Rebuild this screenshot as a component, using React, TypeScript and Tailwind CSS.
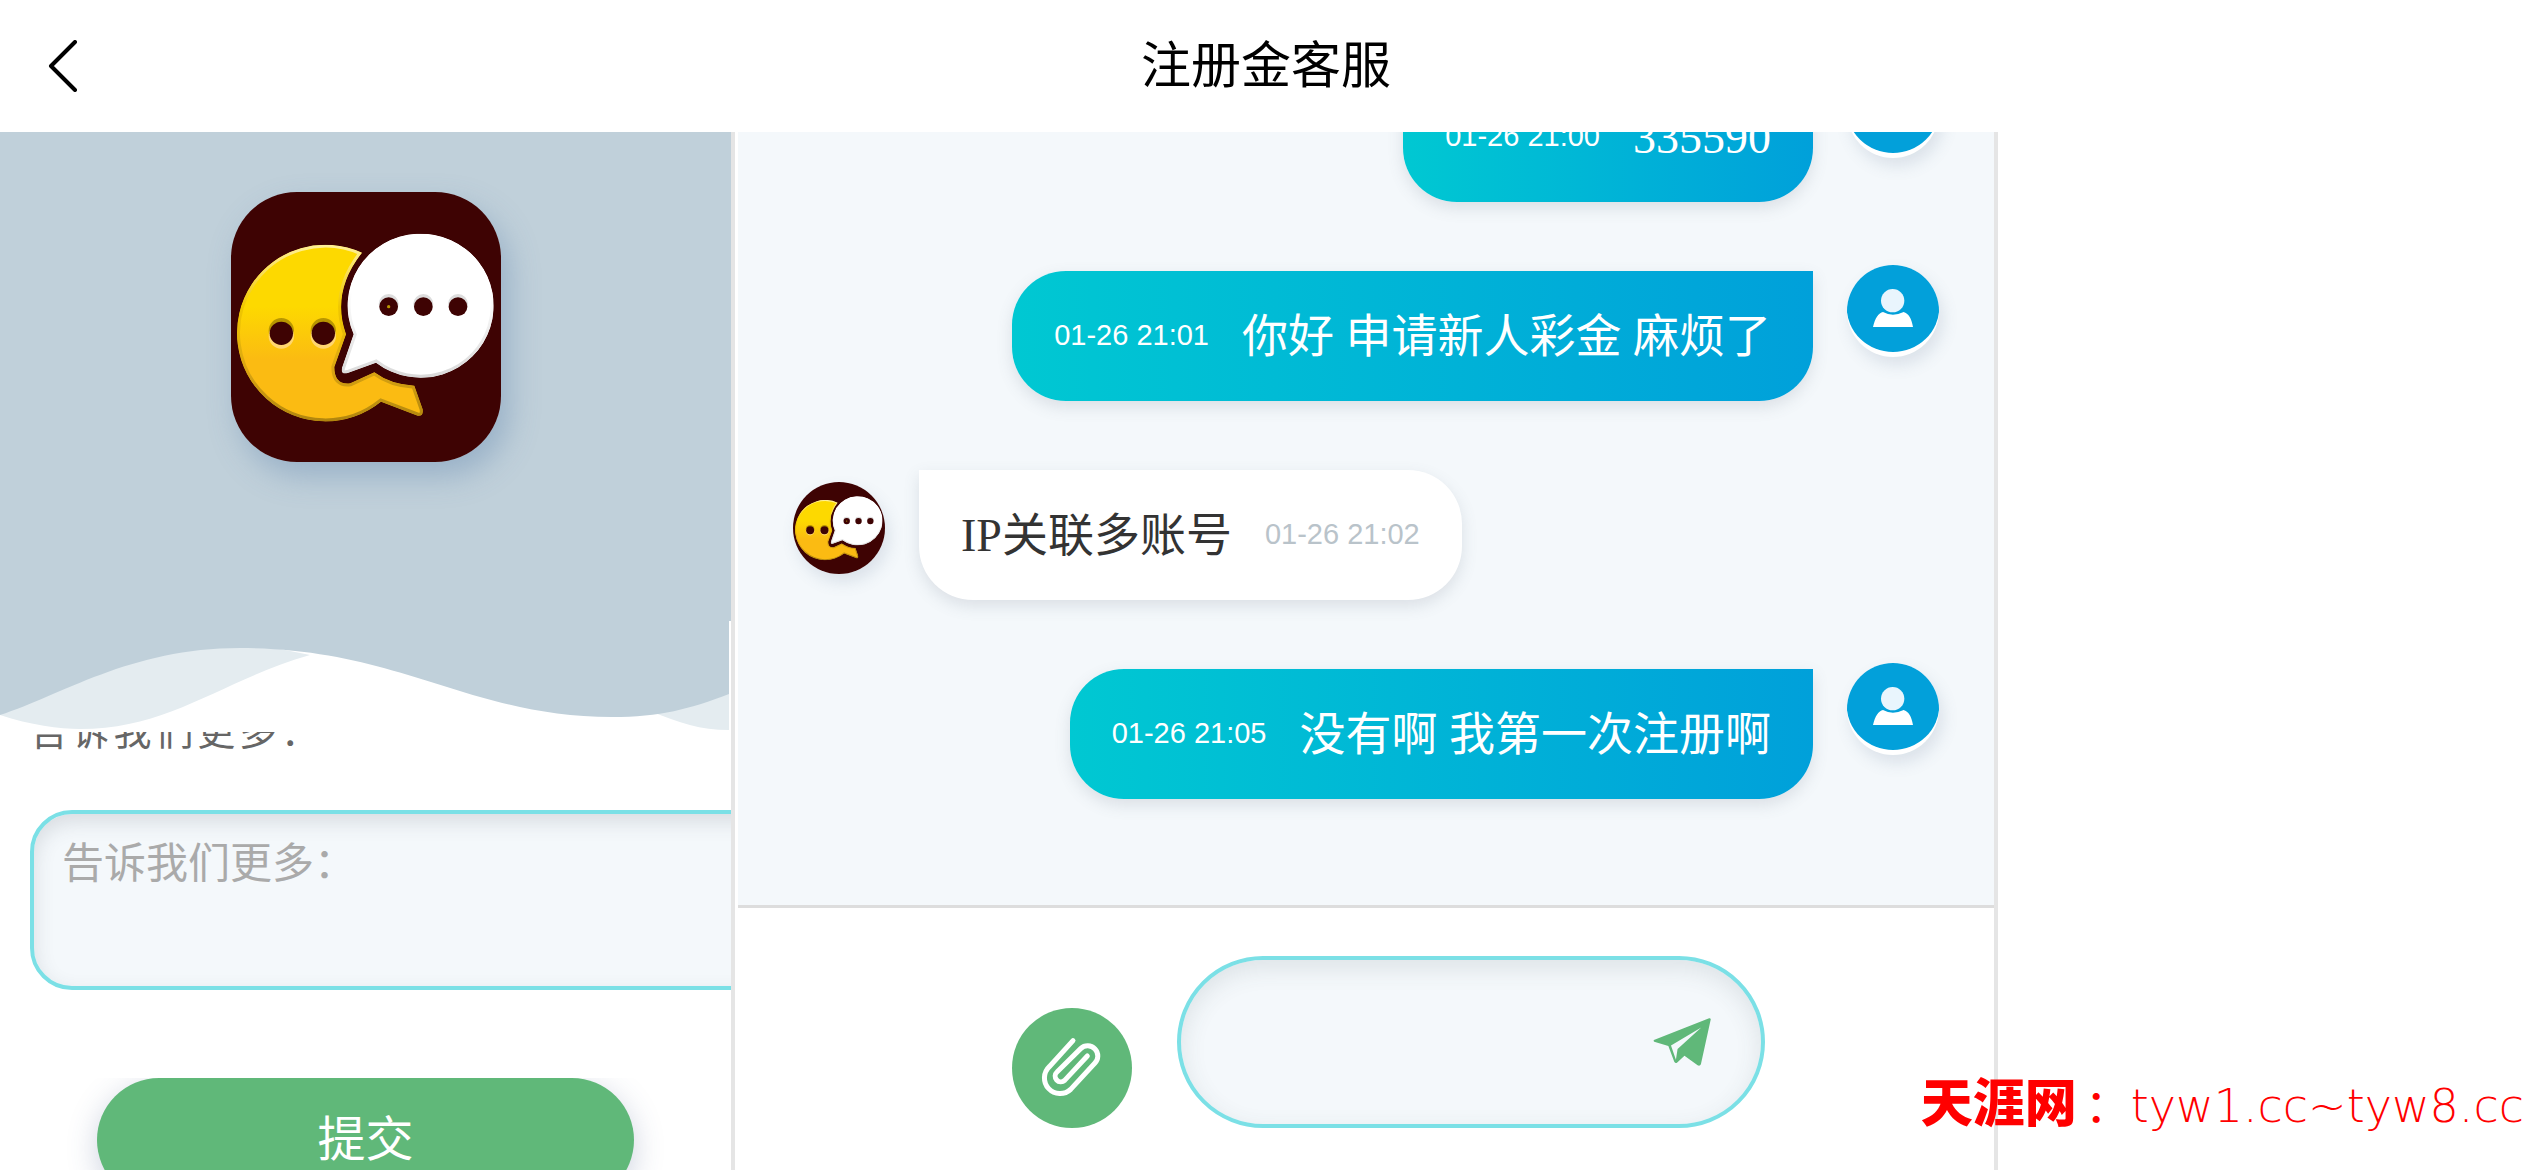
import { useState } from "react";

type Message = {
  id: number;
  from: "me" | "agent";
  text: string;
  time: string;
};

const messages: Message[] = [
  { id: 1, from: "me", text: "335590", time: "01-26 21:00" },
  { id: 2, from: "me", text: "你好 申请新人彩金 麻烦了", time: "01-26 21:01" },
  { id: 3, from: "agent", text: "IP关联多账号", time: "01-26 21:02" },
  { id: 4, from: "me", text: "没有啊 我第一次注册啊", time: "01-26 21:05" },
];

const yellowBubble =
  "M393 182A265 265 0 1 0 450 629L560 671Q578 674 575 652L550 581Q480 578 430 541L358 574Q310 580 310 525L345 427Q300 300 393 182Z";
const whiteBubble =
  "M368 427A219 216 0 1 1 435 512L350 543Q328 548 333 528Z";

const ChatLogo = ({ className }: { className: string }) => (
  <svg viewBox="0 0 810 810" className={className} aria-hidden="true">
    <defs>
      <linearGradient id="yellow" x1="0" y1="0" x2="0" y2="1">
        <stop offset="0.35" stopColor="#fdd900" />
        <stop offset="0.65" stopColor="#fbbb12" />
      </linearGradient>
      <linearGradient id="yellowEdge" x1="0" y1="0" x2="0" y2="1">
        <stop offset="0" stopColor="#fff09a" />
        <stop offset="0.35" stopColor="#f0c800" />
        <stop offset="0.7" stopColor="#dba512" />
        <stop offset="1" stopColor="#b0850e" />
      </linearGradient>
      <linearGradient id="whiteEdge" x1="0" y1="0" x2="0" y2="1">
        <stop offset="0.4" stopColor="#ffffff" />
        <stop offset="1" stopColor="#d9d9d9" />
      </linearGradient>
      <clipPath id="yellowClip">
        <path d={yellowBubble} />
      </clipPath>
      <clipPath id="whiteClip">
        <path d={whiteBubble} />
      </clipPath>
    </defs>
    <rect width="810" height="810" fill="#3e0303" />
    <path
      d={yellowBubble}
      fill="url(#yellow)"
      stroke="url(#yellowEdge)"
      strokeWidth="18"
      clipPath="url(#yellowClip)"
    />
    <path
      d={whiteBubble}
      fill="#ffffff"
      stroke="url(#whiteEdge)"
      strokeWidth="18"
      clipPath="url(#whiteClip)"
    />
    {[151, 277].map((cx) => (
      <g key={cx}>
        <circle cx={cx} cy="416" r="38" fill="#b89600" />
        <circle cx={cx} cy="432" r="38" fill="#ffd670" />
        <circle cx={cx} cy="424" r="35" fill="#3e0303" />
      </g>
    ))}
    {[473, 577, 681].map((cx) => (
      <g key={cx}>
        <circle cx={cx} cy="336" r="30" fill="#dddddd" />
        <circle cx={cx} cy="344" r="28" fill="#3e0303" />
      </g>
    ))}
    <circle cx="473" cy="344" r="5" fill="#b89600" />
  </svg>
);

const UserAvatar = () => (
  <svg
    viewBox="0 0 276 276"
    className="size-[92px] shrink-0 rounded-full bg-white shadow-[4px_8px_16px_rgba(90,110,140,0.16)]"
    aria-hidden="true"
  >
    <ellipse cx="138" cy="126" rx="139" ry="135" fill="#02a0da" />
    <circle cx="137" cy="107" r="35" fill="#e9f5fd" />
    <path
      d="M78 186C84 160 95 143 108 141Q137 157 170 141C184 145 194 160 198 186Z"
      fill="#ffffff"
    />
  </svg>
);

const MessageRow = ({ message }: { message: Message }) => {
  if (message.from === "me") {
    return (
      <li className="flex items-start justify-end gap-[34px]">
        <div className="mt-1.5 flex h-[130px] items-center gap-[33px] rounded-[54px] rounded-tr-none bg-linear-to-r from-[#00c8d2] to-[#00a0da] px-[42px] text-white shadow-[0_6px_16px_rgba(90,100,120,0.16)]">
          <time className="font-['Liberation_Sans',sans-serif] text-[29px]">
            {message.time}
          </time>
          <p className="text-[46px]">{message.text}</p>
        </div>
        <UserAvatar />
      </li>
    );
  }

  return (
    <li className="flex items-start gap-[34px]">
      <ChatLogo className="mt-[18px] size-[92px] shrink-0 rounded-full shadow-[4px_8px_16px_rgba(90,110,140,0.16)]" />
      <div className="mt-1.5 flex h-[130px] items-center gap-[33px] rounded-[54px] rounded-tl-none bg-white px-[42px] shadow-[0_6px_16px_rgba(90,100,120,0.16)]">
        <p className="text-[46px] text-[#333333]">{message.text}</p>
        <time className="font-['Liberation_Sans',sans-serif] text-[29px] text-[#b9c3ca]">
          {message.time}
        </time>
      </div>
    </li>
  );
};

const Waves = () => (
  <svg
    viewBox="0 0 729 111"
    preserveAspectRatio="none"
    className="mr-0.5 h-[111px] w-[calc(100%-2px)]"
    aria-hidden="true"
  >
    <path
      d="M0 94C30 104 60 108 80 108C170 108 220 60 310 34L240 20L0 60ZM650 90C680 102 700 109 729 109V60H650Z"
      fill="#e4ecf0"
    />
    <path
      d="M0 0H729V73C690 88 660 96 612 96C470 96 400 27 240 27C130 27 60 75 0 94Z"
      fill="#c0d0da"
    />
  </svg>
);

const FeedbackPanel = () => {
  const [details, setDetails] = useState("");

  return (
    <aside className="flex min-h-0 min-w-0 flex-col overflow-hidden border-r-4 border-[#e5e5e5]">
      <div className="flex h-[489px] shrink-0 justify-center bg-[#c0d0da] pt-[60px]">
        <ChatLogo className="size-[270px] rounded-[66px] shadow-[8px_14px_30px_rgba(80,120,165,0.35)]" />
      </div>
      <Waves />
      <form className="flex min-h-0 flex-1 flex-col">
        {/* scrolled so that the label is half hidden under the waves */}
        <div className="h-[346px] shrink-0 overflow-hidden pl-[30px]">
          <label
            htmlFor="details"
            className="-mt-5 block h-10 text-[38px] leading-10 tracking-widest text-[#666666]"
          >
            告诉我们更多：
          </label>
          <textarea
            id="details"
            value={details}
            onChange={(e) => setDetails(e.target.value)}
            placeholder="告诉我们更多："
            className="mt-[58px] block h-[180px] w-[120%] resize-none rounded-[42px] border-4 border-[#7be0e6] bg-[#f4f8fb] px-7 py-[22px] text-[42px] leading-[56px] shadow-[inset_0_8px_20px_rgba(60,70,80,0.15)] placeholder:text-[#aaaaaa]"
          />
        </div>
        <div className="min-h-0 flex-1 overflow-hidden px-[97px]">
          <button
            type="button"
            className="h-[124px] w-full rounded-full bg-[#60b879] text-[48px] text-white shadow-[0_8px_30px_rgba(60,80,130,0.25)]"
          >
            提交
          </button>
        </div>
      </form>
    </aside>
  );
};

const Composer = () => {
  const [draft, setDraft] = useState("");

  return (
    <form className="flex h-[265px] shrink-0 items-end gap-[45px] border-t-[3px] border-[#dddddd] bg-white pr-[229px] pb-[42px] pl-[274px]">
      <button
        type="button"
        aria-label="附件"
        className="size-[120px] shrink-0 rounded-full bg-[#60b879]"
      >
        <svg viewBox="0 0 360 360" fill="none">
          <path
            d="M183 98L112 176A46 46 0 0 0 176 244L248 166A29 29 0 0 0 206 122L135 192A16 16 0 0 0 158 217L226 144"
            stroke="#ffffff"
            strokeWidth="15"
            strokeLinecap="round"
          />
        </svg>
      </button>
      <div className="flex h-[172px] min-w-0 flex-1 items-center rounded-full border-4 border-[#7be0e6] bg-[#f4f8fb] px-[50px] shadow-[inset_0_8px_24px_rgba(60,70,80,0.12)]">
        <input
          type="text"
          aria-label="消息"
          value={draft}
          onChange={(e) => setDraft(e.target.value)}
          className="min-w-0 flex-1 bg-transparent text-[46px] outline-none"
        />
        <button type="submit" aria-label="发送" className="shrink-0">
          <svg viewBox="38 53 175 146" className="h-12 w-[58px]">
            <path
              d="M213 57Q212 53 208 54L40 120Q38 123 41 125L84 138L102 186Q106 192 111 188L133 168L173 197Q180 200 183 194ZM92 137L184 82L112 147L107 180Z"
              fill="#60b879"
              fillRule="evenodd"
            />
          </svg>
        </button>
      </div>
    </form>
  );
};

const App = () => {
  return (
    <div className="relative flex h-screen flex-col overflow-hidden bg-white font-['Liberation_Sans','Noto_Sans_CJK_SC',sans-serif]">
      <header className="grid h-[132px] shrink-0 grid-cols-[1fr_auto_1fr] items-center px-12">
        <button type="button" aria-label="返回" className="w-[30px]">
          <svg viewBox="0 0 30 52" fill="none" className="h-[52px] w-[30px]">
            <path
              d="M27 2L3 26L27 50"
              stroke="#000000"
              strokeWidth="4"
              strokeLinecap="round"
              strokeLinejoin="round"
            />
          </svg>
        </button>
        <h1 className="text-[50px] text-black">注册金客服</h1>
      </header>

      <div className="grid min-h-0 flex-1 grid-cols-[735fr_1263fr_534fr] grid-rows-[minmax(0,1fr)]">
        <FeedbackPanel />
        <main className="flex min-h-0 min-w-0 flex-col border-r-4 border-[#e5e5e5] pl-[3px]">
          <ul className="flex min-h-0 flex-1 flex-col justify-end gap-[63px] overflow-hidden bg-[#f4f8fb] px-[55px] pb-[106px] font-['Liberation_Serif','Noto_Sans_CJK_SC',serif]">
            {messages.map((message) => (
              <MessageRow key={message.id} message={message} />
            ))}
          </ul>
          <Composer />
        </main>
      </div>

      <p className="absolute right-2 bottom-8 flex items-baseline text-[#ff0000]">
        <span className="mr-2 font-['Noto_Sans_CJK_SC',sans-serif] text-[52px] leading-[64px] font-black">
          天涯网
        </span>
        <span className="font-['Noto_Sans_CJK_SC',sans-serif] text-[46px] leading-[64px]">
          ：
        </span>
        <span className="font-['DejaVu_Sans',sans-serif] text-[46px] leading-[64px] font-extralight">
          tyw1.cc~tyw8.cc
        </span>
      </p>
    </div>
  );
};

export default App;
